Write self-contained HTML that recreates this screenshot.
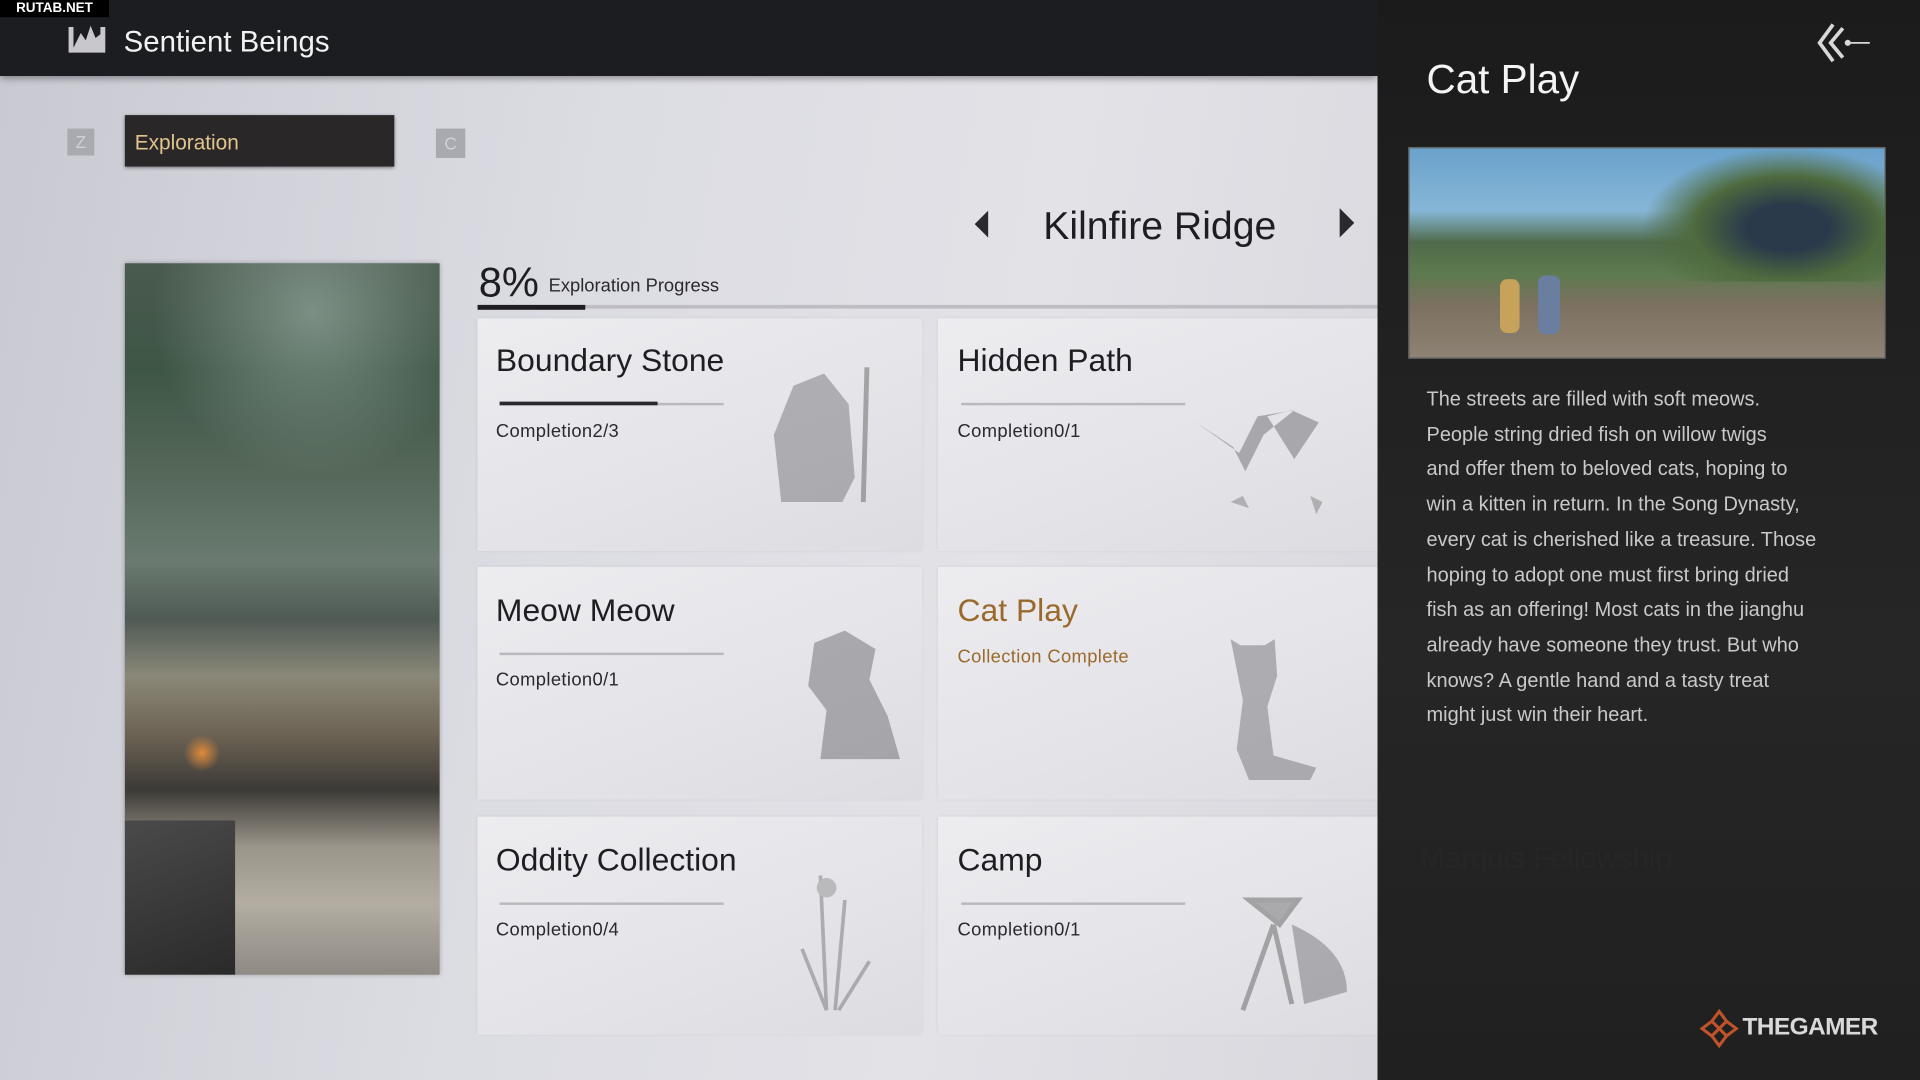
<!DOCTYPE html>
<html><head><meta charset="utf-8"><style>
html,body{margin:0;padding:0;width:1920px;height:1080px;overflow:hidden;background:#1b1c1f}
#s{position:absolute;left:0;top:0;width:1568px;height:882px;transform:scale(1.22449);transform-origin:0 0;font-family:"Liberation Sans","Noto Sans CJK SC",sans-serif}
.a{position:absolute}
.main{left:0;top:62px;width:1125px;height:820px;background:linear-gradient(100deg,#c9c9d2 0%,#dcdce3 40%,#e2e2e7 70%,#d8d8de 100%)}
.top{left:0;top:0;width:1125px;height:62px;background:#1c1d21;box-shadow:0 2px 6px rgba(0,0,0,.4)}
.right{left:1125px;top:0;width:443px;height:882px;background:linear-gradient(180deg,#1b1b1c,#262626 60%,#202020)}
.card{background:linear-gradient(160deg,#ededf0,#e3e3e8 60%,#dcdce1);box-shadow:0 0 3px rgba(0,0,0,.08)}
.t{font-size:26px;color:#1e1e22;white-space:nowrap}
.c{font-size:15px;color:#2a2a2e;letter-spacing:.3px}
.ln{height:2px;background:#b8b8bd}
.dk{height:3px;background:#2a2a2e}
.ill{opacity:.45}
</style></head><body><div id="s">
<div class="a main"></div>
<div class="a top"></div>
<div class="a" style="left:0;top:0;width:89px;height:14px;background:#000;color:#fff;font-size:11px;font-weight:bold;line-height:14px;text-align:center">RUTAB.NET</div>
<svg class="a" style="left:54px;top:18px" width="34" height="28" viewBox="0 0 34 28"><path d="M2 4v21h30V4h-4v17H6V4z M6 21l6-12 4 6 4-12 4 10 4-3v11z" fill="#c8c8cc"/></svg>
<div class="a" style="left:101px;top:21px;font-size:24px;color:#f2f2f2">Sentient Beings</div>

<div class="a" style="left:55px;top:105px;width:22px;height:22px;background:#a9a9b0;color:#d0d0d5;font-size:14px;text-align:center;line-height:22px">Z</div>
<div class="a" style="left:102px;top:94px;width:220px;height:42px;background:#2a2729;box-shadow:0 1px 3px rgba(0,0,0,.5)"></div>
<div class="a" style="left:110px;top:107px;font-size:17px;color:#e2c48d">Exploration</div>
<div class="a" style="left:356px;top:105px;width:24px;height:24px;background:#a9a9b0;color:#d0d0d5;font-size:14px;text-align:center;line-height:24px">C</div>

<svg class="a" style="left:796px;top:172px" width="12" height="22"><path d="M11 0L0 11l11 11z" fill="#2a2a2e"/></svg>
<div class="a" style="left:852px;top:166px;font-size:32px;color:#1e1e22">Kilnfire Ridge</div>
<svg class="a" style="left:1094px;top:170px" width="12" height="24"><path d="M0 0l12 12L0 24z" fill="#2a2a2e"/></svg>

<div class="a" style="left:391px;top:212px;font-size:34px;color:#1e1e22">8%</div>
<div class="a" style="left:448px;top:225px;font-size:15px;color:#2a2a2e">Exploration Progress</div>
<div class="a" style="left:390px;top:249px;width:735px;height:3px;background:#bdbdc3"></div>
<div class="a" style="left:390px;top:249px;width:88px;height:4px;background:#1e1e22"></div>

<div class="a" style="left:102px;top:215px;width:257px;height:581px;background:linear-gradient(180deg,#4a5a4e 0%,#3e5646 15%,#56685a 30%,#6a7a70 42%,#4f5a55 50%,#8a8878 58%,#6e6455 66%,#3c3a36 74%,#9a958a 82%,#b3ada2 90%,#8e8a84 100%);box-shadow:0 0 4px rgba(0,0,0,.3)"></div>
<div class="a" style="left:102px;top:215px;width:257px;height:200px;background:radial-gradient(ellipse at 60% 20%,rgba(160,180,170,.6),transparent 60%)"></div>
<div class="a" style="left:150px;top:600px;width:30px;height:30px;background:radial-gradient(#e08a3a,transparent 70%)"></div>
<div class="a" style="left:102px;top:670px;width:90px;height:126px;background:linear-gradient(160deg,#4a4a4a,#2a2a2a)"></div>

<div class="a card" style="left:390px;top:260px;width:363px;height:190px"></div>
<div class="a card" style="left:766px;top:260px;width:359px;height:190px"></div>
<div class="a card" style="left:390px;top:463px;width:363px;height:190px"></div>
<div class="a card" style="left:766px;top:463px;width:359px;height:190px"></div>
<div class="a card" style="left:390px;top:667px;width:363px;height:178px"></div>
<div class="a card" style="left:766px;top:667px;width:359px;height:178px"></div>

<svg class="a ill" style="left:620px;top:295px" width="110" height="135"><path d="M28 20l25-10 20 25 5 60-10 20H18L12 60z" fill="#6c6c70"/><path d="M88 5l-3 110" stroke="#555" stroke-width="4"/></svg>
<svg class="a ill" style="left:975px;top:300px" width="125" height="135"><path d="M2 45l30 20 10 20 15-30 25-20-30 5-15 30zM60 40l20-5 22 10-20 30z" fill="#606065"/><path d="M30 110l10-5 5 10zM95 105l10 5-5 10z" fill="#777"/></svg>
<svg class="a ill" style="left:650px;top:505px" width="95" height="130"><path d="M15 20l25-10 25 15-5 25 15 30 10 35H20l5-40-15-20z" fill="#606065"/></svg>
<svg class="a ill" style="left:995px;top:512px" width="110" height="130"><path d="M10 10l8 5h20l8-5 2 30-8 25 5 40 35 10-5 10H25l-10-25 5-40z" fill="#6a6a6f"/></svg>
<svg class="a ill" style="left:630px;top:705px" width="100" height="130"><path d="M40 10l5 110M60 30l-8 90M25 70l20 50M80 80l-25 40" stroke="#6a6a6f" stroke-width="3" fill="none"/><circle cx="45" cy="20" r="8" fill="#888"/></svg>
<svg class="a ill" style="left:995px;top:725px" width="110" height="105"><path d="M25 10h40l-15 20zM45 30l-25 70M45 30l15 65" stroke="#555" stroke-width="4" fill="#666"/><path d="M60 30q45 20 45 55l-35 10z" fill="#6a6a6f"/></svg>

<div class="a t" style="left:405px;top:279px">Boundary Stone</div>
<div class="a ln" style="left:408px;top:329px;width:183px"></div><div class="a dk" style="left:408px;top:328px;width:129px"></div>
<div class="a c" style="left:405px;top:344px">Completion2/3</div>

<div class="a t" style="left:782px;top:279px">Hidden Path</div>
<div class="a ln" style="left:785px;top:329px;width:183px"></div>
<div class="a c" style="left:782px;top:344px">Completion0/1</div>

<div class="a t" style="left:405px;top:483px">Meow Meow</div>
<div class="a ln" style="left:408px;top:533px;width:183px"></div>
<div class="a c" style="left:405px;top:547px">Completion0/1</div>

<div class="a t" style="left:782px;top:483px;color:#9a6a2c">Cat Play</div>
<div class="a c" style="left:782px;top:528px;color:#9a6a2c">Collection Complete</div>

<div class="a t" style="left:405px;top:687px">Oddity Collection</div>
<div class="a ln" style="left:408px;top:737px;width:183px"></div>
<div class="a c" style="left:405px;top:751px">Completion0/4</div>

<div class="a t" style="left:782px;top:687px">Camp</div>
<div class="a ln" style="left:785px;top:737px;width:183px"></div>
<div class="a c" style="left:782px;top:751px">Completion0/1</div>

<div class="a right"></div>
<svg class="a" style="left:1483px;top:18px" width="48" height="34" viewBox="0 0 48 34"><path d="M14 2L3 17l11 15M22 5L12 17l10 12" stroke="#d8d8d8" stroke-width="3" fill="none"/><circle cx="26" cy="17" r="2.5" fill="#d8d8d8"/><path d="M26 17h18" stroke="#d8d8d8" stroke-width="1.5"/></svg>
<div class="a" style="left:1165px;top:46px;font-size:33px;color:#f4f4f4">Cat Play</div>
<div class="a" style="left:1150px;top:120px;width:390px;height:173px;border:1px solid #666;box-sizing:border-box;background:linear-gradient(180deg,#6aa2cc 0%,#86b6d6 30%,#4f6a4a 45%,#5d7a4f 60%,#7c7060 75%,#8e8274 100%)"></div>
<div class="a" style="left:1340px;top:120px;width:200px;height:110px;background:radial-gradient(ellipse at 60% 60%,#2a3a4a 20%,#4e6a3e 45%,transparent 70%)"></div>
<div class="a" style="left:1225px;top:228px;width:16px;height:44px;background:#c7a25a;border-radius:6px"></div>
<div class="a" style="left:1256px;top:225px;width:18px;height:48px;background:#6a7ea0;border-radius:6px"></div>
<div class="a" style="left:1165px;top:312px;font-size:16.3px;line-height:28.7px;color:#c9c9c9;white-space:nowrap">The streets are filled with soft meows.<br>People string dried fish on willow twigs<br>and offer them to beloved cats, hoping to<br>win a kitten in return. In the Song Dynasty,<br>every cat is cherished like a treasure. Those<br>hoping to adopt one must first bring dried<br>fish as an offering! Most cats in the jianghu<br>already have someone they trust. But who<br>knows? A gentle hand and a tasty treat<br>might just win their heart.</div>
<div class="a" style="left:1160px;top:688px;font-size:24px;color:#262626">Marquis Fellowship</div>
<div class="a" style="left:1388px;top:824px;width:32px;height:32px"><svg width="32" height="32"><path d="M16 2l6 8-6 6-6-6zM30 16l-8 6-6-6 6-6zM16 30l-6-8 6-6 6 6zM2 16l8-6 6 6-6 6z" fill="none" stroke="#c0532a" stroke-width="2.5"/></svg></div>
<div class="a" style="left:1423px;top:828px;font-size:20px;font-weight:bold;color:#d9d9d9;letter-spacing:-.5px">THEGAMER</div>
</div></body></html>
